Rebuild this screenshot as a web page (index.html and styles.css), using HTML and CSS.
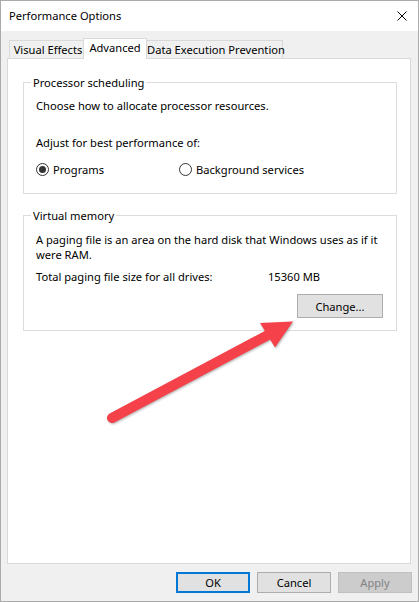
FILE: index.html
```html
<!DOCTYPE html>
<html>
<head>
<meta charset="utf-8">
<title>Performance Options</title>
<link rel="stylesheet" href="styles.css">
</head>
<body>
<div class="window">
  <div class="titlebar">
    <span class="title">Performance Options</span>
    <svg class="close" width="10" height="10" viewBox="0 0 10 10"><path d="M0.5 0.5 L9.5 9.5 M9.5 0.5 L0.5 9.5" stroke="#000" stroke-width="1" fill="none"/></svg>
  </div>
  <div class="body">
    <div class="tabs">
      <div class="tab tab-first">Visual Effects</div>
      <div class="tab tab-active">Advanced</div>
      <div class="tab tab-last">Data Execution Prevention</div>
    </div>
    <div class="panel">
      <fieldset class="group group-cpu">
        <legend>Processor scheduling</legend>
        <div class="line l-choose">Choose how to allocate processor resources.</div>
        <div class="line l-adjust">Adjust for best performance of:</div>
        <div class="radios">
          <label class="radio radio-first"><span class="dot checked"></span>Programs</label>
          <label class="radio"><span class="dot"></span>Background services</label>
        </div>
      </fieldset>
      <fieldset class="group group-vm">
        <legend>Virtual memory</legend>
        <div class="line l-para">A paging file is an area on the hard disk that Windows uses as if it<br>were RAM.</div>
        <div class="line l-total"><span class="total-label">Total paging file size for all drives:</span><span>15360 MB</span></div>
        <div class="change-row"><button class="btn btn-change">Change...</button></div>
      </fieldset>
    </div>
    <div class="buttons">
      <button class="btn btn-ok">OK</button>
      <button class="btn">Cancel</button>
      <button class="btn btn-disabled">Apply</button>
    </div>
  </div>
  <svg class="arrow" width="419" height="602" viewBox="0 0 419 602">
    <line x1="112" y1="418" x2="268" y2="335" stroke="#f5424a" stroke-width="10" stroke-linecap="round"/>
    <polygon points="293,321.5 260,323 275,347.5" fill="#f5424a"/>
  </svg>
</div>
</body>
</html>
```
FILE: styles.css
```css
* { box-sizing: border-box; }
html, body { margin: 0; padding: 0; }
body {
  font-family: "Noto Sans", "Open Sans", sans-serif;
  font-size: 11.15px;
  color: #000;
  background: #fff;
}
.window {
  position: relative;
  width: 419px;
  height: 602px;
  border: 1px solid #aaaaaa;
  display: flex;
  flex-direction: column;
  overflow: hidden;
}
.titlebar {
  height: 30px;
  background: #fff;
  display: flex;
  align-items: center;
  justify-content: space-between;
  padding: 0 11px 1px 8px;
  line-height: 15px;
}
.close { display: block; }
.body {
  flex: 1;
  background: #f0f0f0;
  padding: 7px 7px 8px 6px;
  display: flex;
  flex-direction: column;
}
.tabs {
  display: flex;
  align-items: flex-end;
  padding-left: 2px;
  height: 20px;
}
.tab {
  line-height: 15px;
  border: 1px solid #d9d9d9;
  border-bottom: none;
  background: #f0f0f0;
  height: 18px;
  padding-top: 1px;
  text-align: center;
  white-space: nowrap;
}
.tab-first { width: 74px; border-right: none; padding-left: 3px; }
.tab-last { width: 136px; border-left: none; }
.tab-active {
  width: 64px;
  height: 21px;
  margin-bottom: -1px;
  background: #fff;
  position: relative;
  z-index: 1;
  padding-top: 1px;
}
.panel {
  width: 404px;
  height: 506px;
  border: 1px solid #d9d9d9;
  background: #fff;
  padding: 16px 0 0 15px;
}
.group {
  width: 374px;
  margin: 0;
  padding: 0 12px;
  border: 1px solid #dcdcdc;
  min-inline-size: 0;
}
.group legend {
  padding: 0 2px;
  margin-left: -5px;
  line-height: 15px;
}
.line { line-height: 15px; }
.group-cpu { padding-bottom: 16px; }
.l-choose { margin-top: 8px; }
.l-adjust { margin-top: 22px; }
.radios {
  margin-top: 12px;
  display: flex;
  line-height: 15px;
}
.radio {
  display: flex;
  align-items: center;
  gap: 4px;
}
.radio-first { width: 143px; }
.dot {
  width: 13px;
  height: 13px;
  border: 1px solid #333;
  border-radius: 50%;
  display: flex;
  align-items: center;
  justify-content: center;
  background: #fff;
  flex: none;
}
.dot.checked::after {
  content: "";
  width: 7px;
  height: 7px;
  border-radius: 50%;
  background: #333;
}
.group-vm { margin-top: 14px; padding-bottom: 12px; }
.l-para { margin-top: 9px; }
.l-total { margin-top: 7px; display: flex; }
.total-label { width: 232px; }
.change-row {
  margin-top: 10px;
  display: flex;
  justify-content: flex-end;
  padding-right: 1px;
}
.btn {
  font: inherit;
  color: #000;
  background: #e1e1e1;
  border: 1px solid #adadad;
  padding: 0;
  line-height: 15px;
  width: 74px;
  height: 21px;
}
.btn-change { width: 86px; height: 24px; }
.buttons {
  margin-top: 8px;
  margin-right: -1px;
  display: flex;
  justify-content: flex-end;
  gap: 7px;
}
.btn-ok { border: 2px solid #0078d7; }
.btn-disabled {
  background: #cccccc;
  border-color: #bfbfbf;
  color: #838383;
}
.arrow {
  position: absolute;
  left: -1px;
  top: -1px;
  pointer-events: none;
  filter: drop-shadow(1px 1px 1px rgba(0,0,0,0.3));
}
```
